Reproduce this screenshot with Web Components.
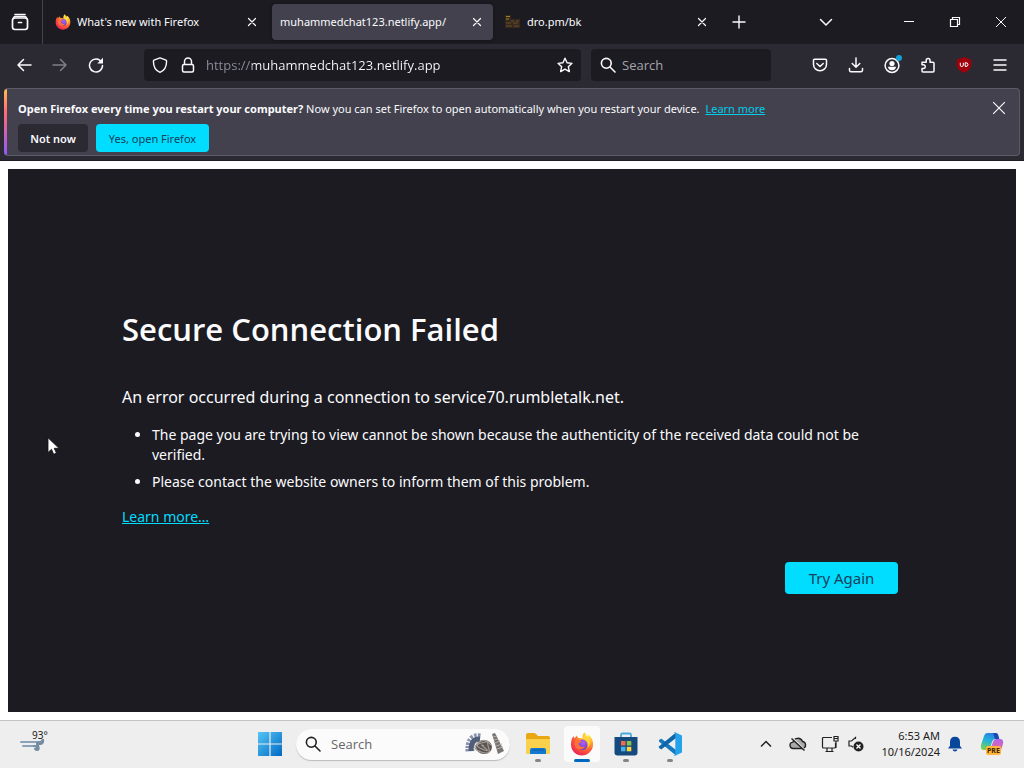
<!DOCTYPE html>
<html lang="en">
<head>
<meta charset="utf-8">
<title>Problem loading page</title>
<style>
html, body { margin: 0; height: 100%; }
body { font-family: "Noto Sans", "Open Sans", sans-serif; font-size: 12px; overflow: hidden; background: #fff; }
</style>
</head>
<body>
<desktop-screen></desktop-screen>
<script>
const ICONS = {
  view: [20, '<g fill="none" stroke="currentColor" stroke-width="1.7" stroke-linecap="round"><path d="M5 2.5h10"/><rect x="2.5" y="6" width="15" height="11.5" rx="2.4"/><path d="M3.5 6.2q.4-1.7 2-1.700h9q1.600 0 2 1.700"/><path d="M8.500 10.500h3"/></g>'],
  back: [16, '<path d="M15 8H2M7.500 2.500 2 8l5.500 5.500" fill="none" stroke="currentColor" stroke-width="1.5" stroke-linecap="round" stroke-linejoin="round"/>'],
  forward: [16, '<path d="M1 8h13M8.500 2.500 14 8l-5.500 5.500" fill="none" stroke="currentColor" stroke-width="1.5" stroke-linecap="round" stroke-linejoin="round"/>'],
  reload: [16, '<path d="M13.500 5A6.500 6.500 0 1 0 14.500 8.500" fill="none" stroke="currentColor" stroke-width="1.500" stroke-linecap="round"/><path d="M15 .8V6q0 .6-.6.6H9.300z" fill="currentColor"/>'],
  shield: [16, '<path d="M8 .9 14 3.200q.6.3.6 1C14.600 10 12 13.700 8 15.300 4 13.700 1.400 10 1.400 4.200q0-.7.6-1z" fill="none" stroke="currentColor" stroke-width="1.400" stroke-linejoin="round"/>'],
  lock: [16, '<g fill="none" stroke="currentColor" stroke-width="1.500"><rect x="2.500" y="7.500" width="11" height="7.500" rx="1.500"/><path d="M4.500 7.500V4.500a3.500 3.500 0 0 1 7 0v3"/></g>'],
  star: [16, '<path d="m8 1.200 2.050 4.600 4.950.55-3.700 3.350 1.050 4.900L8 12.100l-4.350 2.500 1.050-4.900L1 6.350l4.950-.55z" fill="none" stroke="currentColor" stroke-width="1.400" stroke-linejoin="round"/>'],
  search: [16, '<g fill="none" stroke="currentColor" stroke-width="1.600" stroke-linecap="round"><circle cx="6.300" cy="6.300" r="4.900"/><path d="m10 10 5 5"/></g>'],
  close: [12, '<path d="m2.500 2.500 7 7m0-7-7 7" stroke="currentColor" stroke-width="1.200" stroke-linecap="round"/>'],
  plus: [14, '<path d="M7 1v12M1 7h12" stroke="currentColor" stroke-width="1.400" stroke-linecap="round"/>'],
  chevron: [14, '<path d="m1.500 4.500 5.500 5.500 5.500-5.500" fill="none" stroke="currentColor" stroke-width="1.500" stroke-linecap="round" stroke-linejoin="round"/>'],
  up: [14, '<path d="m2 9.500 5-5 5 5" fill="none" stroke="currentColor" stroke-width="1.500"/>'],
  minimize: [12, '<path d="M1 5.500h10" stroke="currentColor"/>'],
  restore: [12, '<path d="M1.500 3.500h7v7h-7zM3.500 3.500v-2h7v7h-2" fill="none" stroke="currentColor" stroke-width="1.200"/>'],
  winclose: [12, '<path d="m1 1 10 10m0-10-10 10" stroke="currentColor"/>'],
  pocket: [16, '<g fill="none" stroke="currentColor" stroke-width="1.500" stroke-linecap="round" stroke-linejoin="round"><path d="M2.500 2.200h11a1 1 0 0 1 1 1V7.500a6.500 6.200 0 0 1-13 0V3.200a1 1 0 0 1 1-1z"/><path d="m4.800 6.500 3.200 3 3.200-3"/></g>'],
  download: [16, '<path d="M8 1v9M4.200 6.500 8 10.200l3.800-3.700M1.500 11.500v1.800a1.400 1.400 0 0 0 1.400 1.400h10.200a1.400 1.400 0 0 0 1.400-1.400v-1.800" fill="none" stroke="currentColor" stroke-width="1.500" stroke-linecap="round" stroke-linejoin="round"/>'],
  account: [20, '<circle cx="10" cy="10.500" r="6.900" fill="none" stroke="currentColor" stroke-width="1.500"/><circle cx="10" cy="8.500" r="2.600" fill="currentColor"/><path d="M5.800 11.800h8.400q-.9 3.500-4.200 3.500t-4.200-3.500z" fill="currentColor"/><circle cx="17" cy="3" r="3" fill="#12a0d8"/>'],
  puzzle: [16, '<path d="M2 5.200h4.200V3.300a1.900 1.900 0 0 1 3.800 0v1.900h3a1 1 0 0 1 1 1v7.800a1 1 0 0 1-1 1H3a1 1 0 0 1-1-1v-2.500h1.800a1.900 1.900 0 0 0 0-3.700H2z" fill="none" stroke="currentColor" stroke-width="1.500" stroke-linejoin="round"/>'],
  menu: [16, '<path d="M2 3h12M2 8h12M2 13h12" stroke="currentColor" stroke-width="1.400" stroke-linecap="round"/>'],
  blocker: [16, '<path d="M8 0q3 1.200 6.500 2.300 1.500 3 .8 6.500Q14 13.500 8 16 2 13.500.7 8.800 0 5.300 1.500 2.300 5 1.200 8 0z" fill="#a0000c"/><path d="M4.300 5.700v2.500q0 1.300 1.500 1.300t1.500-1.300V5.700M9.200 5.700v3.800q2.800.2 2.800-1.900t-2.800-1.900z" fill="none" stroke="#fff" stroke-width="1"/>'],
  firefox: [24, `<defs><radialGradient id="a" cx=".75" cy=".15" r="1"><stop offset="0" stop-color="#fff04a"/><stop offset=".3" stop-color="#ffb42e"/><stop offset=".6" stop-color="#ff6035"/><stop offset="1" stop-color="#e8175c"/></radialGradient><radialGradient id="b" cx=".6" cy=".3" r=".8"><stop offset="0" stop-color="#b060f5"/><stop offset="1" stop-color="#5238c4"/></radialGradient></defs><path d="M14.300.5c1.500 1 2.200 2.500 2.700 3.800l1.500-1.500c3 2.500 5 6.200 4.500 10.500C22.400 19.300 17.800 23.500 12 23.500S1 19 1 12.500C1 9.300 1.800 6.200 3.500 4c.2 1 .5 1.700 1 2.200L7 3.500c.2 1.300.7 2 1.500 2.500 1.500-.2 3 .1 4 .7-.3-2.200.3-4.600 1.800-6.200z" fill="url(#a)"/><circle cx="12.200" cy="12.800" r="5.200" fill="url(#b)"/><path d="M5 9c2-1.500 4.500-1.200 6.300-.2.600 1.200-.8 2-2.700 2.500 0 3 3.500 4.500 6.500 3.200-1.500 3.500-6.500 4-9.100 1.200C4.500 14 4.200 11 5 9z" fill="#ff7139"/><path d="M17 4.500c3.500 3.200 3.500 8 1 11.500 1-5-1-8.500-4.500-10z" fill="#ffd43c"/>`],
  ruin: [16, '<path d="M0 1h6v4h9v9H0z" fill="#35281c"/><path d="M1 2.500h4M1 5h3" stroke="#a87a2c"/><path d="M6 7h3m2 0h3M1 9h5m2 0h5M1 12h6m2 0h5" stroke="#6b4f2a"/>'],
  wind: [28, '<g fill="none" stroke="#8ba3b8" stroke-width="2" stroke-linecap="round"><path d="M1 9h19q3 0 3-2"/><path d="M3 13h12"/></g><path d="M16 9q5 0 6-3h2q1 5-3 6h-5z" fill="#758da3"/><path d="M13 12h6q2 6-2 6-3 0-3-3h2q0-1-3-1z" fill="#758da3"/>'],
  windows: [24, '<defs><linearGradient id="w" x2="1" y2="1"><stop offset="0" stop-color="#55c5f5"/><stop offset="1" stop-color="#0069c4"/></linearGradient></defs><path d="M0 0h11.400v11.400H0zM12.600 0H24v11.400H12.600zM0 12.600h11.400V24H0zM12.600 12.600H24V24H12.600z" fill="url(#w)"/>'],
  folder: [24, '<path d="M0 3q0-2 2-2h6q1 0 2 1l2 2h10q2 0 2 2v14H0z" fill="#e8a713"/><path d="M0 7h24v14q0 1-1 1H1q-1 0-1-1z" fill="#fbd04c"/><path d="M4 22v-4q0-2 2-2h12q2 0 2 2v4z" fill="#1378cf"/><path d="M6 18h12" stroke="#0c5ca8" stroke-width="1"/>'],
  store: [24, '<path d="M7 6V3q0-1.500 1.500-1.500h7Q17 1.500 17 3v3" fill="none" stroke="#48a9dc" stroke-width="1.800"/><path d="M.5 5h23v15.500q0 3-3 3h-17q-3 0-3-3z" fill="#164a7c"/><path d="M7 9h4.500v4.500H7z" fill="#f06a4c"/><path d="M12.800 9h4.500v4.500h-4.500z" fill="#8bc34a"/><path d="M7 14.800h4.500v4.500H7z" fill="#43b2ee"/><path d="M12.800 14.800h4.500v4.500h-4.500z" fill="#ffd53e"/>'],
  vscode: [24, '<path d="m1.200 8 2-1.600L18 18v5.500L1.200 9.800q-.6-.9 0-1.800z" fill="#1579bd"/><path d="m1.200 16 2 1.600L18 6V.5L1.200 14.200q-.6.900 0 1.800z" fill="#0f67aa"/><path d="M17 .3 24 3.500v17l-7 3.200q-1 .2-1.500-.5 1.800.5 1.800-1.200V2q0-1.700-1.800-1.200.5-.7 1.500-.5z" fill="#24a3ec"/>'],
  cloud: [18, '<path d="M4.500 13.500a3.200 3.200 0 0 1-.5-6.400 5 5 0 0 1 9.500-.6 3.600 3.600 0 0 1 .5 7z" fill="#aaa" stroke="#222" stroke-width="1.400"/><path d="m3 2.500 13 12.500" stroke="#eee" stroke-width="1.600"/><path d="m2.500 3.500 13 12" stroke="#222" stroke-width="1.400"/>'],
  network: [18, '<g fill="none" stroke="#222" stroke-width="1.200"><path d="M11 2.500H2.500q-1 0-1 1v8.500q0 1 1 1h11q1 0 1-1V8"/><path d="M6 13v3.500m5-3.500v3.500M4.500 16.500h8M13 1.500h4v4.500h-4zM13 3.500h4M15 6v7"/></g>'],
  speaker: [18, '<path d="M8.500 4v-1.500L4.500 6H2v5h2.500l1.500 1.300" fill="none" stroke="#222" stroke-width="1.200"/><circle cx="11.500" cy="11.500" r="5" fill="#222"/><path d="m9.500 9.500 4 4m0-4-4 4" stroke="#fff" stroke-width="1.300"/>'],
  bell: [16, '<path d="M8 .8q5 0 5 5.500v3.500l2 2.700H1l2-2.700V6.300Q3 .8 8 .8zM5.500 13.500h5q-.5 2-2.500 2t-2.500-2z" fill="#06479c"/>'],
  pointer: [18, '<path d="M1 .8v14.700l3.500-3.200 2.200 5 2.700-1.200-2.200-4.800H12z" fill="#fff" stroke="#111" stroke-width=".8"/>']
};

const define = (name, markup, setup) => {
  const template = document.createElement('template');
  template.innerHTML = markup;
  customElements.define(name, class extends HTMLElement {
    constructor() {
      super();
      this.attachShadow({ mode: 'open' }).append(template.content.cloneNode(true));
    }
    connectedCallback() { if (setup) setup(this, this.shadowRoot); }
  });
};

const BUTTON = `button { font: inherit; color: inherit; background: none; border: 0; padding: 0; margin: 0; }`;

define('ui-icon', `<style>:host { display: block; flex: none; } div, svg { display: block; }</style><div></div>`, (host, root) => {
  const [box, body] = ICONS[host.getAttribute('name')];
  const size = host.getAttribute('size') || box;
  root.querySelector('div').innerHTML = `<svg aria-hidden="true" width="${size}" height="${size}" viewBox="0 0 ${box} ${box}">${body}</svg>`;
});

define('icon-button', `<style>
:host { display: block; flex: none; width: 36px; height: 36px; }
${BUTTON}
button { width: 100%; height: 100%; display: grid; place-items: center; }
</style><button type="button"></button>`, (host, root) => {
  const button = root.querySelector('button');
  const icon = document.createElement('ui-icon');
  icon.setAttribute('name', host.getAttribute('icon'));
  if (host.hasAttribute('size')) icon.setAttribute('size', host.getAttribute('size'));
  button.replaceChildren(icon);
  button.setAttribute('aria-label', host.getAttribute('label'));
});

define('browser-tab', `<style>
:host { display: flex; align-items: center; flex: 0 1 221px; min-width: 76px; height: 36px; box-sizing: border-box; padding: 0 4px 0 8px; border-radius: 4px; color: #fbfbfe; }
:host([selected]) { background: #42414d; box-shadow: 0 0 3px #0006; }
.label { flex: 1; min-width: 0; white-space: nowrap; overflow: hidden; font-size: 11px; line-height: 20px; }
::slotted(ui-icon) { margin-right: 6px; }
icon-button { width: 24px; height: 24px; }
</style><slot name="icon"></slot><span class="label"><slot></slot></span><icon-button icon="close" label="Close tab"></icon-button>`);

define('tab-strip', `<style>
:host { display: flex; align-items: center; height: 44px; background: #1c1b22; color: #fbfbfe; }
.view { width: 43px; height: 44px; box-sizing: border-box; padding-right: 2px; border-right: 1px solid #45444c; margin-right: 4px; }
.tabs { display: flex; gap: 4px; flex: 0 1 671px; min-width: 0; }
.space { flex: 1 0 0px; }
.all { margin-right: 42px; }
.win { width: 46px; height: 44px; }
.new { margin-left: 3px; }
</style>
<icon-button class="view" icon="view" label="Firefox View"></icon-button>
<div class="tabs">
<browser-tab><ui-icon slot="icon" name="firefox" size="16"></ui-icon>What's new with Firefox</browser-tab>
<browser-tab selected>muhammedchat123.netlify.app/</browser-tab>
<browser-tab><ui-icon slot="icon" name="ruin" size="16"></ui-icon>dro.pm/bk</browser-tab>
</div>
<icon-button class="new" icon="plus" label="New tab"></icon-button>
<span class="space"></span>
<icon-button class="all" icon="chevron" label="List all tabs"></icon-button>
<icon-button class="win" icon="minimize" label="Minimize"></icon-button>
<icon-button class="win" icon="restore" label="Restore"></icon-button>
<icon-button class="win" icon="winclose" label="Close"></icon-button>`);

define('nav-bar', `<style>
:host { display: flex; align-items: center; height: 44px; box-sizing: border-box; padding: 0 6px 2px; background: #2b2a33; color: #fbfbfe; font-family: "Open Sans", sans-serif; }
.field { display: flex; align-items: center; height: 32px; background: #1c1b22; border-radius: 4px; box-sizing: border-box; }
.url { flex: 1; min-width: 0; margin: 0 10px 0 30px; padding: 0 8px; gap: 12px; }
.search { flex: 0 0 auto; width: 180px; margin-right: 31px; padding: 0 9px; gap: 6px; }
input { flex: 1; min-width: 0; border: 0; padding: 0; outline: 0; font: inherit; font-size: 13px; line-height: 20px; color: #fbfbfe; background: none; }
.url input { margin-left: -2px; color: transparent; background: linear-gradient(90deg, #8f8f9d 46px, #fbfbfe 46px); -webkit-background-clip: text; background-clip: text; }
input::placeholder { color: #a5a5ac; opacity: 1; }
.off { opacity: .4; }
</style>
<icon-button icon="back" label="Back"></icon-button>
<icon-button class="off" icon="forward" label="Forward"></icon-button>
<icon-button icon="reload" label="Reload"></icon-button>
<div class="field url"><ui-icon name="shield"></ui-icon><ui-icon name="lock"></ui-icon><input type="text" aria-label="Address" value="https://muhammedchat123.netlify.app"><ui-icon name="star"></ui-icon></div>
<div class="field search"><ui-icon name="search"></ui-icon><input type="text" aria-label="Search" placeholder="Search"></div>
<icon-button icon="pocket" label="Save to Pocket"></icon-button>
<icon-button icon="download" label="Downloads"></icon-button>
<icon-button icon="account" label="Account"></icon-button>
<icon-button icon="puzzle" label="Extensions"></icon-button>
<icon-button icon="blocker" label="Content blocker"></icon-button>
<icon-button icon="menu" label="Menu"></icon-button>`);

define('notice-bar', `<style>
:host { display: block; padding: 0 4px 4px; background: #2b2a33; color: #fbfbfe; border-bottom: 1px solid #1c1b22; }
.box { display: flex; align-items: flex-start; box-sizing: border-box; min-height: 68px; border: 1px solid #5b5a66; border-left: 0; border-radius: 4px; background: linear-gradient(#ffbd4f, #ff6a75 35%, #9059ff) left / 3px 100% no-repeat #42414d; padding: 10px 2px 3px 14px; }
.body { flex: 1; }
p { margin: 0 0 5px; font-size: 11px; line-height: 20px; }
a { color: #00ccec; margin-left: 3px; }
.row { display: flex; gap: 8px; }
${BUTTON}
button { height: 28px; min-width: 70px; padding: 0 8px; border-radius: 4px; background: #2b2a33; font-weight: 600; font-size: 11px; }
button.primary { min-width: 113px; background: #00ddff; color: #15405a; font-weight: 400; }
.dismiss { height: 18px; }
</style>
<div class="box" role="status"><div class="body">
<p><b>Open Firefox every time you restart your computer?</b> Now you can set Firefox to open automatically when you restart your device. <a href="#">Learn more</a></p>
<div class="row"><button type="button">Not now</button><button type="button" class="primary">Yes, open Firefox</button></div>
</div><icon-button class="dismiss" icon="winclose" size="14" label="Dismiss"></icon-button></div>`);

define('error-page', `<style>
:host { display: flex; flex: 1; min-height: 0; padding: 8px; background: #fff; }
main { flex: 1; display: flex; flex-direction: column; justify-content: center; align-items: center; background: #1c1b22; color: #fbfbfe; padding: 0 48px; font-size: 14px; line-height: 20px; }
section { width: 100%; max-width: 780px; margin-top: 20px; }
h1 { margin: 0 0 34px; font-family: "Open Sans", sans-serif; font-size: 31px; line-height: 44px; font-weight: 600; }
h2 { margin: 0 0 16px; font-size: 16px; line-height: 24px; font-weight: 400; }
ul { margin: 0 0 15px; padding: 0 0 0 30px; }
li { margin: 0 0 7px; }
a { color: #00ddff; }
.actions { display: flex; justify-content: flex-end; margin: 35px 4px 0 0; }
${BUTTON}
button { height: 32px; min-width: 113px; padding: 0 20px; border-radius: 4px; background: #00ddff; color: #15405a; font-size: 15px; }
</style>
<main><section>
<h1>Secure Connection Failed</h1>
<h2>An error occurred during a connection to service70.rumbletalk.net.</h2>
<ul><li>The page you are trying to view cannot be shown because the authenticity of the received data could not be verified.</li><li>Please contact the website owners to inform them of this problem.</li></ul>
<a href="#">Learn more…</a>
<div class="actions"><button type="button">Try Again</button></div>
</section></main>`);

define('task-app', `<style>
:host { display: block; flex: none; }
${BUTTON}
button { width: 36px; height: 36px; display: grid; place-items: center; position: relative; border-radius: 4px; }
:host([running]) button::after { content: ""; position: absolute; bottom: 0; left: 15px; width: 6px; height: 3px; border-radius: 2px; background: #858585; }
:host([active]) button { background: #fbfbfb; }
:host([active]) button::after { left: 10px; width: 16px; background: #0067c0; }
</style><button type="button"><slot></slot></button>`, (host, root) => root.querySelector('button').setAttribute('aria-label', host.getAttribute('label')));

define('fossil-art', `<style>:host { display: block; flex: none; } svg { display: block; }</style>
<svg width="44" height="24" viewBox="0 0 44 24" aria-hidden="true">
<path d="M18 6Q7 4 8 20" fill="none" stroke="#8590ab" stroke-width="9" stroke-dasharray="2 1"/>
<path d="M18 7Q9 6 9 19" fill="none" stroke="#525d78" stroke-width="5"/>
<ellipse cx="22" cy="15" rx="8" ry="7" fill="#5b5552"/>
<path d="M29 13Q23 5 16 11t3 9 8-3-1-7-7 1 1 6 3-1-1-2" fill="none" stroke="#a89e98" stroke-width="1.200"/>
<path d="m30 2 3-1 9 18-6 3z" fill="#777371"/><path d="m31 5 4-1M32 8l4-1M33 11l5-2M34 14l6-2M35 17l6-2" stroke="#b4afab"/>
</svg>`);

define('copilot-art', `<style>
:host { display: block; flex: none; position: relative; width: 26px; height: 26px; }
svg { display: block; }
b { position: absolute; left: 7px; top: 15px; padding: 0 1px; font-size: 7px; line-height: 9px; border-radius: 2px; background: #ffb83d; color: #402000; }
</style>
<svg width="26" height="26" viewBox="0 0 26 26" aria-hidden="true"><defs><linearGradient id="c" x1=".6" x2=".3" y2="1"><stop offset="0" stop-color="#2a7fe0"/><stop offset=".5" stop-color="#24b6d8"/><stop offset="1" stop-color="#7fd04c"/></linearGradient><linearGradient id="d" x2="0" y2="1"><stop offset="0" stop-color="#b066ed"/><stop offset="1" stop-color="#f76a85"/></linearGradient></defs>
<path d="M8 2h8q2 0 3 3l1 3h-4q-2 0-3 3l-2 6q-1 2-3 2H5q-4 0-3-5l3-9q1-3 3-3z" fill="url(#c)"/><path d="M14 2h3q2 0 2.500 3l.8 3H16z" fill="#1b49b5"/><path d="M17 8h4q4 0 3 5l-2 6q-1 3-4 3h-6q-2 0-1-3l3-8q1-3 3-3z" fill="url(#d)"/></svg><b>PRE</b>`);

define('task-bar', `<style>
:host { display: grid; grid-template-columns: 3fr auto 4fr; align-items: center; height: 48px; box-sizing: border-box; border-top: 1px solid #c4c4c4; background: #eeeeee; color: #202020; }
.weather { position: relative; margin-left: 20px; width: 28px; height: 28px; }
.weather span { position: absolute; left: 12px; top: -3px; font-size: 10px; line-height: 14px; }
.weather ui-icon { padding-top: 2px; }
.apps { display: flex; align-items: center; gap: 8px; padding-bottom: 1px; }
label { display: flex; align-items: center; gap: 10px; width: 214px; height: 31px; box-sizing: border-box; padding: 0 4px 0 9px; border-radius: 16px; background: #fbfbfb; box-shadow: 0 1px 1px #bbb; margin-right: 2px; }
input { flex: 1; min-width: 0; border: 0; padding: 0; outline: 0; background: none; font: inherit; font-family: "Open Sans", sans-serif; font-size: 13px; line-height: 20px; }
input::placeholder { color: #666; opacity: 1; }
.tray { display: flex; align-items: center; justify-content: flex-end; padding: 0 19px 2px 0; }
time { text-align: right; font-size: 11px; line-height: 16px; margin: 0 7px 0 16px; white-space: nowrap; }
.cloud { margin: 0 14px 0 16px; }
.net { margin-right: 8px; }
.bell { margin-right: 16px; }
</style>
<div class="weather"><ui-icon name="wind"></ui-icon><span>93°</span></div>
<div class="apps">
<task-app label="Start"><ui-icon name="windows"></ui-icon></task-app>
<label><ui-icon name="search"></ui-icon><input type="text" aria-label="Search" placeholder="Search"><fossil-art></fossil-art></label>
<task-app running label="File Explorer"><ui-icon name="folder"></ui-icon></task-app>
<task-app running active label="Firefox"><ui-icon name="firefox"></ui-icon></task-app>
<task-app running label="Microsoft Store"><ui-icon name="store"></ui-icon></task-app>
<task-app running label="Visual Studio Code"><ui-icon name="vscode"></ui-icon></task-app>
</div>
<div class="tray"><ui-icon name="up"></ui-icon><ui-icon class="cloud" name="cloud"></ui-icon><ui-icon class="net" name="network"></ui-icon><ui-icon name="speaker"></ui-icon>
<time datetime="2024-10-16T06:53">6:53 AM<br>10/16/2024</time><ui-icon class="bell" name="bell"></ui-icon><copilot-art></copilot-art></div>`);

define('desktop-screen', `<style>
:host { display: flex; flex-direction: column; height: 100vh; position: relative; }
.pointer { position: absolute; left: 47px; top: 437px; }
</style>
<tab-strip></tab-strip><nav-bar></nav-bar><notice-bar></notice-bar><error-page></error-page><task-bar></task-bar>
<ui-icon class="pointer" name="pointer"></ui-icon>`);
</script>
</body>
</html>
